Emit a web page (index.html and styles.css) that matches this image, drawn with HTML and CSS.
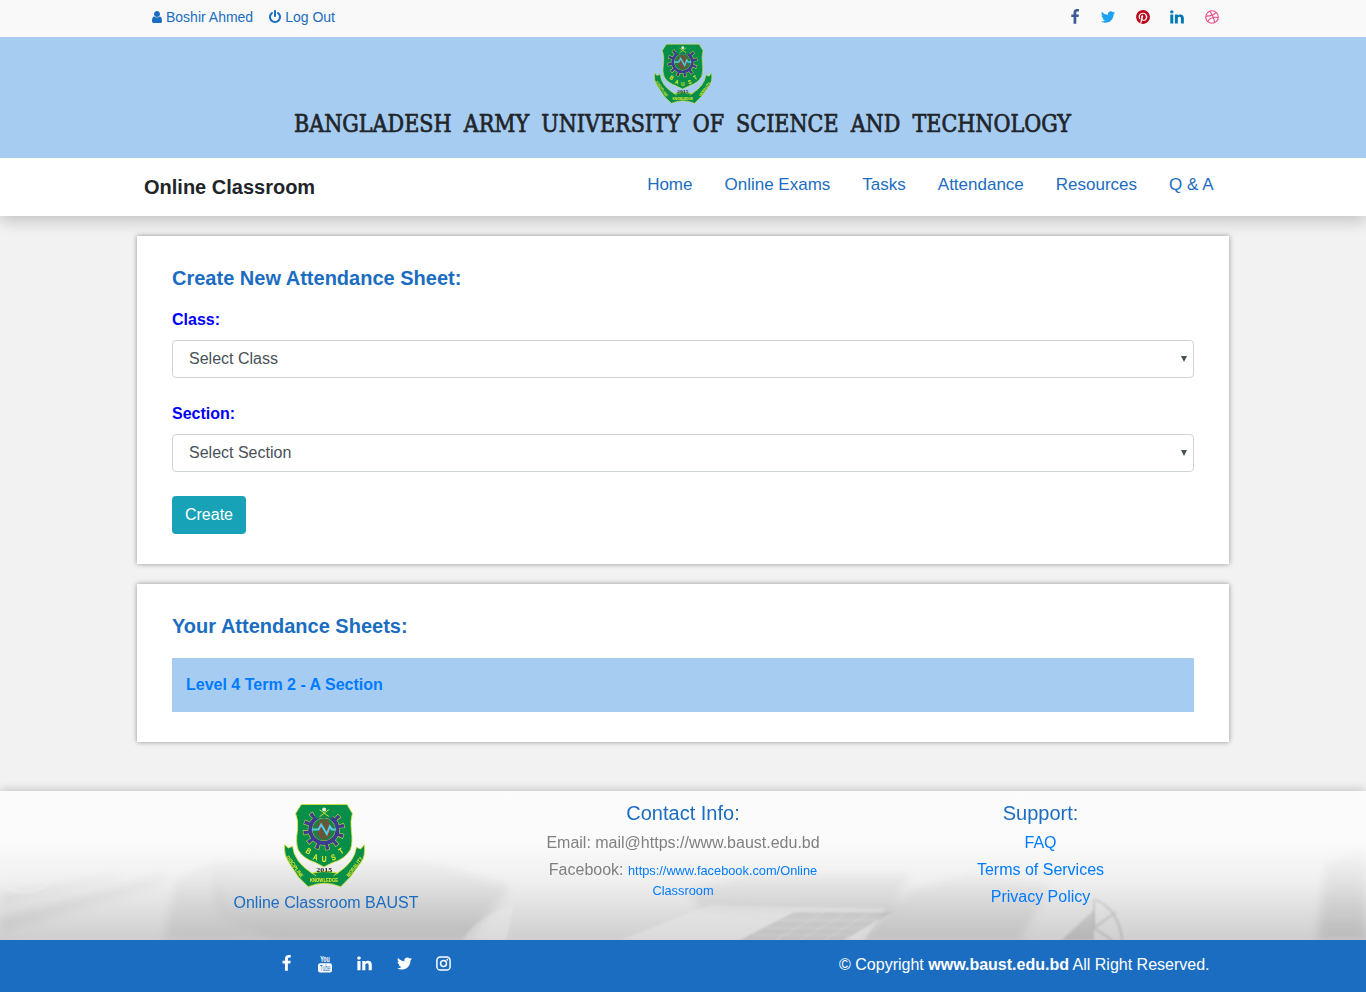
FILE: index.html
```html
<!DOCTYPE html>
<html lang="en">
<head>
<meta charset="utf-8">
<title>Online Classroom</title>
<link rel="stylesheet" href="styles.css">
</head>
<body>
<svg class="defs" width="0" height="0" aria-hidden="true">
  <defs>
    <symbol id="facebook" viewBox="0 0 1792 1792"><path d="M1343 12v264h-157q-86 0-116 36t-30 108v189h293l-39 296h-254v759h-306v-759h-255v-296h255v-218q0-186 104-288.500t277-102.500q147 0 228 12z"/></symbol>
    <symbol id="twitter" viewBox="0 0 1792 1792"><path d="M1684 408q-67 98-162 167 1 14 1 42 0 130-38 259.500t-115.500 248.500-184.500 210.500-258 146-323 54.500q-271 0-496-145 35 4 78 4 225 0 401-138-105-2-188-64.500t-114-159.500q33 5 61 5 43 0 85-11-112-23-185.500-111.500t-73.500-205.500v-4q68 38 146 41-66-44-105-115t-39-154q0-88 44-163 121 149 294.500 238.500t371.500 99.500q-8-38-8-74 0-134 94.500-228.500t228.500-94.500q140 0 236 102 109-21 205-78-37 115-142 178 93-10 186-50z"/></symbol>
    <symbol id="linkedin" viewBox="0 0 1792 1792"><path d="M477 625v991h-330v-991h330zm21-306q1 73-50.500 122t-135.500 49h-2q-82 0-132-49t-50-122q0-74 51.500-122.500t134.500-48.500 133 48.500 51 122.500zm1166 729v568h-329v-530q0-105-40.500-164.500t-126.500-59.500q-63 0-105.500 34.500t-63.500 85.500q-11 30-11 81v553h-329q2-399 2-647t-1-296l-1-48h329v144h-2q20-32 41-56t56.500-52 87-43.500 114.500-15.500q171 0 275 113.500t104 332.500z"/></symbol>
    <symbol id="power" viewBox="0 0 1792 1792"><path d="M1664 896q0 156-61 298t-164 245-245 164-298 61-298-61-245-164-164-245-61-298q0-182 80.500-343t226.500-270q43-32 95.500-25t83.500 50q32 42 24.500 94.500t-49.500 84.500q-98 74-151.500 181t-53.500 228q0 104 40.500 198.500t109.500 163.500 163.500 109.500 198.500 40.500 198.500-40.500 163.500-109.500 109.500-163.500 40.500-198.500q0-121-53.500-228t-151.500-181q-42-32-49.500-84.500t24.500-94.500q31-43 84-50t95 25q146 109 226.500 270t80.500 343zm-640-768v640q0 52-38 90t-90 38-90-38-38-90v-640q0-52 38-90t90-38 90 38 38 90z"/></symbol>
    <symbol id="user" viewBox="0 0 1792 1792"><path d="M1536 1399q0 109-62.500 187t-150.500 78h-854q-88 0-150.500-78t-62.500-187q0-85 8.500-160.500t31.500-152 58.500-131 94-89 134.500-34.500q131 128 313 128t313-128q76 0 134.500 34.500t94 89 58.500 131 31.500 152 8.500 160.500zm-256-887q0 159-112.500 271.500t-271.500 112.500-271.500-112.500-112.500-271.500 112.500-271.500 271.500-112.500 271.500 112.500 112.500 271.500z"/></symbol>
    <symbol id="pinterest" viewBox="-38 -32 572 576"><path d="M496 256c0 137-111 248-248 248-25.600 0-50.200-3.900-73.400-11.100 10.100-16.500 25.200-43.500 30.800-65 3-11.600 15.400-59 15.400-59 8.100 15.400 31.700 28.500 56.800 28.500 74.800 0 128.700-68.800 128.700-154.300 0-81.900-66.900-143.200-152.900-143.200-107 0-163.900 71.800-163.900 150.100 0 36.400 19.400 81.700 50.300 96.100 4.700 2.200 7.200 1.200 8.300-3.300.8-3.400 5-20.300 6.900-28.100.6-2.500.3-4.700-1.700-7.100-10.100-12.500-18.300-35.300-18.300-56.600 0-54.700 41.400-107.600 112-107.600 60.900 0 103.600 41.500 103.600 100.900 0 67.100-33.900 113.600-78 113.600-24.300 0-42.600-20.100-36.700-44.800 7-29.500 20.500-61.300 20.500-82.600 0-19-10.200-34.900-31.400-34.900-24.900 0-44.900 25.700-44.900 60.200 0 22 7.400 36.800 7.400 36.800s-24.500 103.800-29 123.200c-5 21.400-3 51.600-.9 71.200C65.400 450.900 0 361.100 0 256 0 119 111 8 248 8s248 111 248 248z"/></symbol>
    <symbol id="dribbble" viewBox="0 0 16 16"><g fill="none" stroke="currentColor" stroke-width="1.1"><circle cx="8" cy="8" r="6.3"/><path d="M5.600 2.200Q9.600 7 10.700 13.700M1.800 7.100Q8.600 7.300 12.300 3.400M3.700 12.500Q7 7 14.200 8.500"/></g></symbol>
    <symbol id="instagram" viewBox="0 0 16 16"><rect x="1.800" y="1.800" width="12.400" height="12.400" rx="3.200" fill="none" stroke="currentColor" stroke-width="1.400"/><circle cx="8" cy="8" r="2.800" fill="none" stroke="currentColor" stroke-width="1.400"/><circle cx="11.600" cy="4.400" r=".9"/></symbol>
    <symbol id="youtube" viewBox="0 0 16 18"><text x="3.200" y="7.300" font-family="Liberation Sans" font-weight="bold" font-size="9" textLength="9.600" lengthAdjust="spacingAndGlyphs">You</text><rect x="1" y="8.300" width="14" height="9.200" rx="2.200"/><text x="2.800" y="16" font-family="Liberation Sans" font-size="8.500" fill="#1b6dc1" textLength="10.600" lengthAdjust="spacingAndGlyphs">Tube</text></symbol>
    <symbol id="crest" viewBox="40 24 250 260">
      <g stroke="#d8e335" stroke-width="2.500" stroke-linejoin="round">
        <path fill="#078f49" d="M45 150l11 10 13-5q4 46 58 81 36-10 77 0 52-34 57-78l13 5 11-13q4 35-10 53l-33 45-28 29q-50-22-98 0l-29-29-30-46q-15-22-12-52z"/>
        <path fill="#078f49" d="M95 29h138l16 27q-7 22-3 52 5 34-3 57-16 28-53 39l-27 13-25-13q-38-12-52-38-9-22-2-60 3-30-6-50z"/>
        <path fill="none" d="M128 236q36-12 77 0M128 236l12 8M204 236l-12 8"/>
      </g>
      <g fill="none">
        <circle cx="163" cy="104" r="51" stroke="#d8e335" stroke-width="25" stroke-dasharray="12.500 14.200" transform="rotate(-48 163 104)"/>
        <circle cx="163" cy="104" r="41" stroke="#d8e335" stroke-width="15"/>
        <circle cx="163" cy="104" r="51" stroke="#3b3b91" stroke-width="22" stroke-dasharray="9.500 17.200" stroke-dashoffset="-1.500" transform="rotate(-48 163 104)"/>
        <circle cx="163" cy="104" r="41" stroke="#3b3b91" stroke-width="12"/>
      </g>
      <path fill="#078f49" d="M130 34h66l-8 38q-25-8-50 0z"/>
      <circle cx="163" cy="104" r="33" fill="#1c8048"/>
      <path d="M147 84v40M155 76v56M163 74v60M171 76v56M179 84v40" stroke="#943f2d" stroke-width="5"/>
      <path d="M127 104h20l8-15 17 29 9-23 6 9h13" fill="none" stroke="#55cbe8" stroke-width="6"/>
      <path d="M150 45l28 20M179 44l-29 22" stroke="#cbdc38" stroke-width="3"/><circle cx="164" cy="44" r="6" fill="#e7ece0"/>
      <g fill="#f4ee24" font-family="Liberation Sans" font-size="25" font-weight="bold" text-anchor="middle">
        <text transform="translate(112 177) rotate(32) scale(.8 1)">B</text><text transform="translate(136 196) rotate(16) scale(.8 1)">A</text><text transform="translate(164 203) scale(.8 1)">U</text><text transform="translate(195 196) rotate(-18) scale(.8 1)">S</text><text transform="translate(220 176) rotate(-34) scale(.8 1)">T</text>
      </g>
      <text x="140" y="232" font-family="Liberation Serif" font-weight="bold" font-size="17" fill="#222" textLength="48" lengthAdjust="spacingAndGlyphs">2015</text>
      <g fill="#f4ee24" font-family="Liberation Sans" font-weight="bold" font-size="15">
        <text transform="translate(49 188) rotate(54)" textLength="76" lengthAdjust="spacingAndGlyphs">DISCIPLINE</text>
        <text x="121" y="261" textLength="85" lengthAdjust="spacingAndGlyphs">KNOWLEDGE</text>
        <text transform="translate(239 248) rotate(-54)" textLength="70" lengthAdjust="spacingAndGlyphs">MORALITY</text>
      </g>
    </symbol>
  </defs>
</svg>

<div class="topbar">
  <div class="account">
    <a><svg class="ico-sm user"><use href="#user"/></svg>Boshir Ahmed</a>
    <a><svg class="ico-sm"><use href="#power"/></svg>Log Out</a>
  </div>
  <div class="top-social">
    <svg class="fb"><use href="#facebook"/></svg>
    <svg class="tw"><use href="#twitter"/></svg>
    <svg class="pin"><use href="#pinterest"/></svg>
    <svg class="li"><use href="#linkedin"/></svg>
    <svg class="dr"><use href="#dribbble"/></svg>
  </div>
</div>

<header class="banner">
  <svg class="banner-crest"><use href="#crest"/></svg>
  <svg class="banner-title" viewBox="0 0 780 30">
    <text x="1" y="23" textLength="777" lengthAdjust="spacingAndGlyphs">BANGLADESH ARMY UNIVERSITY OF SCIENCE AND TECHNOLOGY</text>
  </svg>
</header>

<nav class="navbar">
  <div class="brand">Online Classroom</div>
  <div class="links"><a>Home</a><a>Online Exams</a><a>Tasks</a><a>Attendance</a><a>Resources</a><a>Q &amp; A</a></div>
</nav>

<main>
  <section class="card create">
    <h2>Create New Attendance Sheet:</h2>
    <label>Class:</label>
    <div class="select"><span>Select Class</span><svg width="6" height="6"><path d="M0 0h6L3 6z"/></svg></div>
    <label>Section:</label>
    <div class="select"><span>Select Section</span><svg width="6" height="6"><path d="M0 0h6L3 6z"/></svg></div>
    <button>Create</button>
  </section>
  <section class="card sheets">
    <h2>Your Attendance Sheets:</h2>
    <a class="sheet">Level 4 Term 2 - A Section</a>
  </section>
</main>

<footer>
  <div class="info">
    <svg class="scene" viewBox="0 0 1366 149" preserveAspectRatio="none">
      <defs>
        <linearGradient id="fade" x2="0" y2="1"><stop offset="0" stop-color="#fff" stop-opacity="0"/><stop offset=".45" stop-color="#fff" stop-opacity=".15"/><stop offset="1" stop-color="#fff"/></linearGradient>
        <mask id="m"><rect width="1366" height="149" fill="url(#fade)"/></mask>
        <filter id="soft"><feGaussianBlur stdDeviation="4"/></filter>
        <filter id="edge"><feGaussianBlur stdDeviation=".8"/></filter>
      </defs>
      <g mask="url(#m)">
        <g filter="url(#soft)">
          <path d="M165 149l10-60 42-20 5 50q10 25 65 30z" fill="#999" opacity=".25"/>
          <path d="M215 70h215l80 25-40 54H280q-60-12-65-40z" fill="#8e8e8e" opacity=".3"/>
          <path d="M0 125l165-42v8L0 142zM0 103l120-20v4L0 115z" fill="#aaa" opacity=".3"/>
          <path d="M690 98l60-15h160l-20 40-190-4z" fill="#999" opacity=".3"/>
          <path d="M860 149l50-50 60-15 80 10-30 55z" fill="#888" opacity=".2"/>
          <path d="M1326 70l40-10v89h-48z" fill="#888" opacity=".3"/>
        </g>
        <g filter="url(#edge)">
          <path d="M462 149q20-28 52-34l-8 34z" fill="#fff" opacity=".25"/>
          <path d="M620 149l90-35 175 4-20 31z" fill="#fff" opacity=".25"/>
          <path d="M740 149l54-28h98l-48 28z" fill="#999" opacity=".4"/>
          <path d="M752 144h98M766 137h98M780 129h98M775 149l50-28M800 149l48-28M824 149l47-28" stroke="#ddd" stroke-width="1" opacity=".6"/>
          <path d="M1062 149l32-30v30z" fill="#888" opacity=".35"/>
          <path d="M1094 108q25 10 28 41M1094 137l22-16M1094 137l18 12M1094 108v29" fill="none" stroke="#999" stroke-width="2" opacity=".5"/>
          <ellipse cx="25" cy="87" rx="24" ry="14" fill="none" stroke="#fff" stroke-width="2" opacity=".4"/>
        </g>
      </g>
    </svg>
    <div class="col about">
      <svg class="footer-crest"><use href="#crest"/></svg>
      <div>Online Classroom BAUST</div>
    </div>
    <div class="col contact">
      <h3>Contact Info:</h3>
      <p>Email: mail@https://www.baust.edu.bd</p>
      <p class="fb-line">Facebook: <a>https://www.facebook.com/Online<br>Classroom</a></p>
    </div>
    <div class="col support">
      <h3>Support:</h3>
      <a>FAQ</a><a>Terms of Services</a><a>Privacy Policy</a>
    </div>
  </div>
  <div class="bottom">
    <div class="bottom-social">
      <svg><use href="#facebook"/></svg>
      <svg class="yt"><use href="#youtube"/></svg>
      <svg><use href="#linkedin"/></svg>
      <svg><use href="#twitter"/></svg>
      <svg><use href="#instagram"/></svg>
    </div>
    <div class="copy">© Copyright <b>www.baust.edu.bd</b> All Right Reserved.</div>
  </div>
</footer>
</body>
</html>
```
FILE: styles.css
```css
* { box-sizing: border-box; }
body { margin: 0; background: #f2f2f2; font: 16px/24px "Liberation Sans", Arial, sans-serif; color: #212529; }
svg { display: block; fill: currentColor; flex: none; }
.defs { position: absolute; }
h2, h3, p { margin: 0; }

.topbar { height: 37px; padding: 0 146px 3px 150px; background: #f9f9f9; display: flex; justify-content: space-between; align-items: center; }
.account { display: flex; gap: 15px; font-size: 14px; color: #1b6dc1; }
.account a { display: flex; align-items: center; gap: 2px; }
.account a + a { gap: 3px; }
.ico-sm { width: 14px; height: 14px; }
.top-social { display: flex; }
.top-social svg { width: 16px; height: 16px; margin-left: 19px; }
.top-social .tw { margin-left: 17px; }
.top-social .li { margin-left: 18px; }
.top-social .dr { margin-left: 19px; }
.fb { color: #3b5998; }
.tw { color: #1da1f2; }
.pin { color: #bd081c; }
.li { color: #0077b5; }
.dr { color: #ea4c89; }

.banner { height: 121px; background: #a7ccf2; display: flex; flex-direction: column; align-items: center; padding-top: 6px; }
.banner-crest { width: 60px; height: 62px; }
.banner-title { width: 780px; height: 30px; margin-top: 4px; overflow: visible; font-family: "DejaVu Serif Condensed", "DejaVu Serif", serif; font-stretch: condensed; font-size: 25px; word-spacing: 6px; fill: #212529; stroke: #212529; stroke-width: .7px; }

.navbar { position: relative; height: 58px; background: #fff; box-shadow: 0 5px 15px rgba(0,0,0,.2); display: flex; justify-content: space-between; padding: 0 152.5px 0 144px; clip-path: inset(0 0 -30px 0); }
.brand { font-size: 20px; font-weight: bold; line-height: 58px; }
.links { display: flex; gap: 32px; line-height: 53px; font-size: 17px; color: #1b6dc1; }

main { width: 1092px; margin: 20px auto 49px; display: flex; flex-direction: column; gap: 20px; }
.card { background: #fff; padding: 30px 35px; box-shadow: 0 0 5px rgba(0,0,0,.4); }
.create { height: 328px; }
.sheets { height: 158px; }
h2 { font-size: 20px; line-height: 24px; color: #1b6dc1; }
label { display: block; font-weight: bold; color: #00f; line-height: 24px; }
.create h2 { margin-bottom: 18px; }
.select { height: 38px; margin: 8px 0 24px; border: 1px solid #ced4da; border-radius: 4px; padding: 0 6px 0 16px; display: flex; align-items: center; justify-content: space-between; color: #495057; }
button { display: block; width: 74px; height: 38px; padding: 0; border: 0; border-radius: 4px; background: #17a2b8; color: #fff; font: 16px/24px "Liberation Sans", Arial, sans-serif; }
.sheet { display: block; margin-top: 20px; height: 54px; line-height: 54px; padding-left: 14px; background: #a7ccf2; color: #007bff; font-weight: bold; }

.info { position: relative; height: 149px; display: grid; grid-template-columns: 357px 357px 357px; justify-content: center; text-align: center; background: linear-gradient(#fcfcfc 0%, #fafafa 35%, #f0f0f0 60%, #ddd 82%, #cecece 100%); box-shadow: 0 0 10px rgba(0,0,0,.25); }
.scene { position: absolute; inset: 0; width: 100%; height: 100%; }
.col { position: relative; display: flex; flex-direction: column; align-items: center; }
.about { color: #1b6dc1; padding-top: 11px; }
.footer-crest { width: 83px; height: 88px; margin: 0 3px 1px 0; }
h3 { font-weight: normal; font-size: 20px; line-height: 24px; color: #1b6dc1; padding-top: 10px; margin-bottom: 6px; }
.contact { color: #808080; }
.contact p { line-height: 24px; margin-bottom: 3px; }
.contact .fb-line { line-height: 19px; padding-top: 2px; }
.contact a { font-size: 12.8px; }
.col a { color: #007bff; }
.support { padding-left: 1px; }
.support a { line-height: 24px; margin-bottom: 3px; }
.bottom { position: relative; height: 52px; background: #1b6dc1; color: #fff; display: flex; justify-content: space-between; align-items: center; padding: 0 156.500px 3px 278px; }
.bottom-social { display: flex; gap: 22.500px; align-items: center; padding-bottom: 2px; }
.bottom-social svg { width: 17px; height: 17px; }
.bottom-social .yt { width: 16px; height: 18px; margin: 0 1px 0 -1px; }
```
